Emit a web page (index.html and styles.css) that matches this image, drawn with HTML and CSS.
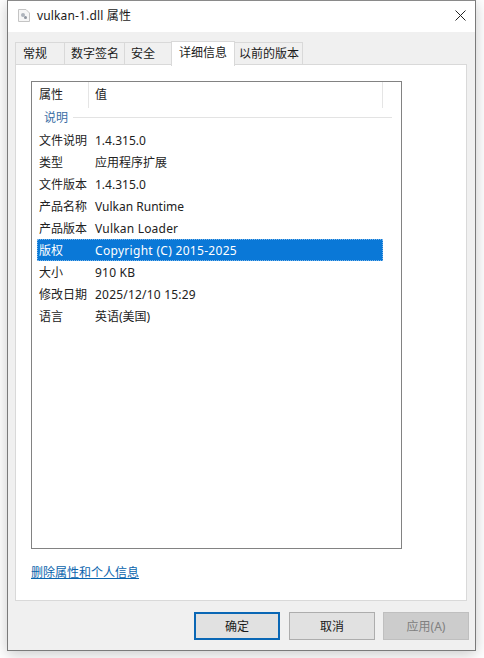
FILE: index.html
```html
<!DOCTYPE html>
<html lang="zh-CN">
<head>
<meta charset="utf-8">
<title>vulkan-1.dll 属性</title>
<link rel="stylesheet" href="styles.css">
</head>
<body>
<div class="window">
  <header class="titlebar">
    <svg class="file-icon" width="12" height="13" viewBox="0 0 12 13"><path d="M.5 .5h7.500l3.500 3.500v8.500h-11z" fill="#f6f6f6" stroke="#c4c4c4"/><circle cx="5" cy="6" r="2" fill="#aeb4bc"/><circle cx="7.500" cy="8.500" r="1.500" fill="#8f96a0"/></svg>
    <span class="title">vulkan-1.dll 属性</span>
    <svg class="close" width="11" height="11" viewBox="0 0 11 11"><path d="M.5 .5l10 10M10.500 .5l-10 10" stroke="#222" stroke-width="1" fill="none"/></svg>
  </header>
  <div class="body">
    <nav class="tabs">
      <span class="tab t1">常规</span>
      <span class="tab t2">数字签名</span>
      <span class="tab t3">安全</span>
      <span class="tab t4 active">详细信息</span>
      <span class="tab t5">以前的版本</span>
    </nav>
    <section class="panel">
      <div class="list">
        <div class="head"><span class="h1">属性</span><span class="h2">值</span></div>
        <div class="group"><span>说明</span><i></i></div>
        <div class="row"><span class="k">文件说明</span><span class="v">1.4.315.0</span></div>
        <div class="row"><span class="k">类型</span><span class="v">应用程序扩展</span></div>
        <div class="row"><span class="k">文件版本</span><span class="v">1.4.315.0</span></div>
        <div class="row"><span class="k">产品名称</span><span class="v">Vulkan Runtime</span></div>
        <div class="row"><span class="k">产品版本</span><span class="v spaced">Vulkan Loader</span></div>
        <div class="row selected"><span class="k">版权</span><span class="v wide">Copyright (C) 2015-2025</span></div>
        <div class="row"><span class="k">大小</span><span class="v spaced">910 KB</span></div>
        <div class="row"><span class="k">修改日期</span><span class="v spaced">2025/12/10 15:29</span></div>
        <div class="row"><span class="k">语言</span><span class="v">英语(美国)</span></div>
      </div>
      <a class="link" href="#">删除属性和个人信息</a>
    </section>
    <footer class="buttons">
      <button class="btn default">确定</button>
      <button class="btn">取消</button>
      <button class="btn disabled">应用(A)</button>
    </footer>
  </div>
</div>
</body>
</html>
```
FILE: styles.css
```css
* { box-sizing: border-box; }
html, body { margin: 0; height: 100%; background: #fff; overflow: hidden; }
body {
  font-family: "Noto Sans", "Noto Sans CJK SC", sans-serif;
  font-size: 12px;
  color: #1a1a1a;
  padding-left: 7px;
}
.window {
  width: 469px;
  height: 651px;
  border: 1px solid #7a7a7a;
  border-top-color: #8a8a8a;
  background: #f0f0f0;
  box-shadow: 0 3px 14px rgba(0,0,0,.22);
  display: flex;
  flex-direction: column;
}
.titlebar {
  height: 31px;
  background: #fff;
  display: flex;
  align-items: center;
  padding: 0 9px 3px 10px;
  flex: none;
}
.file-icon { margin-right: 7px; flex: none; }
.title { flex: 1; font-size: 12px; letter-spacing: .15px; }
.close { flex: none; }
.body { flex: 1; padding: 9px 8px 0 7px; display: flex; flex-direction: column; }
.tabs { display: flex; height: 24px; align-items: flex-end; position: relative; z-index: 1; flex: none; }
.tab {
  height: 23px;
  border: 1px solid #d9d9d9;
  border-left: 0;
  background: #f0f0f0;
  line-height: 22px;
  padding-left: 6px;
  font-size: 12px;
  white-space: nowrap;
}
.t1 { width: 50px; border-left: 1px solid #d9d9d9; padding-left: 7px; }
.t2 { width: 60px; }
.t3 { width: 47px; }
.t5 { width: 68px; padding-left: 4px; }
.tab.active {
  width: 64px;
  height: 25px;
  margin-bottom: -1px;
  background: #fff;
  line-height: 22px;
  border-left: 1px solid #d9d9d9;
  border-bottom: 0;
  margin-left: -1px;
  padding-left: 7px;
  position: relative;
}
.panel {
  width: 452px;
  height: 537px;
  background: #fff;
  border: 1px solid #d9d9d9;
  margin-top: -1px;
  padding: 16px 15px 0;
  flex: none;
}
.list {
  width: 371px;
  height: 468px;
  border: 1px solid #828282;
  padding-left: 1px;
}
.head { display: flex; height: 26px; width: 350px; align-items: center; color: #222; }
.h1 { width: 56px; padding-left: 6px; height: 100%; line-height: 26px; border-right: 1px solid #e5e5e5; }
.h2 { padding-left: 6px; flex: 1; height: 100%; line-height: 26px; border-right: 1px solid #e5e5e5; }
.group { display: flex; align-items: center; height: 18px; padding-left: 11px; color: #3a6ea5; margin-bottom: 3px; width: 359px; }
.group i { flex: 1; height: 1px; background: #e3e3e3; margin-left: 5px; }
.row { display: flex; height: 22px; width: 346px; margin-left: 4px; align-items: center; color: #222; }
.k { width: 52px; padding-left: 2px; white-space: nowrap; flex: none; }
.v { padding-left: 6px; white-space: nowrap; }
.spaced { letter-spacing: .2px; }
.wide { letter-spacing: .3px; }
.selected { background: #0a78d7; color: #fff; outline: 1px dotted #7bb6ea; outline-offset: -1px; }
.link {
  display: block;
  margin-top: 15px;
  color: #0a64ad;
  text-decoration: underline;
  line-height: 17px;
  width: max-content;
}
.buttons {
  display: flex;
  gap: 8px;
  justify-content: flex-end;
  margin-top: 11px;
  margin-right: -2px;
}
.btn {
  width: 86px;
  height: 28px;
  padding: 0;
  border: 1px solid #adadad;
  background: #e1e1e1;
  color: #1a1a1a;
  font: inherit;
}
.btn.default { border: 2px solid #0a67b5; margin-right: 1px; }
.btn.disabled { background: #cccccc; border-color: #bfbfbf; color: #808080; }
```
